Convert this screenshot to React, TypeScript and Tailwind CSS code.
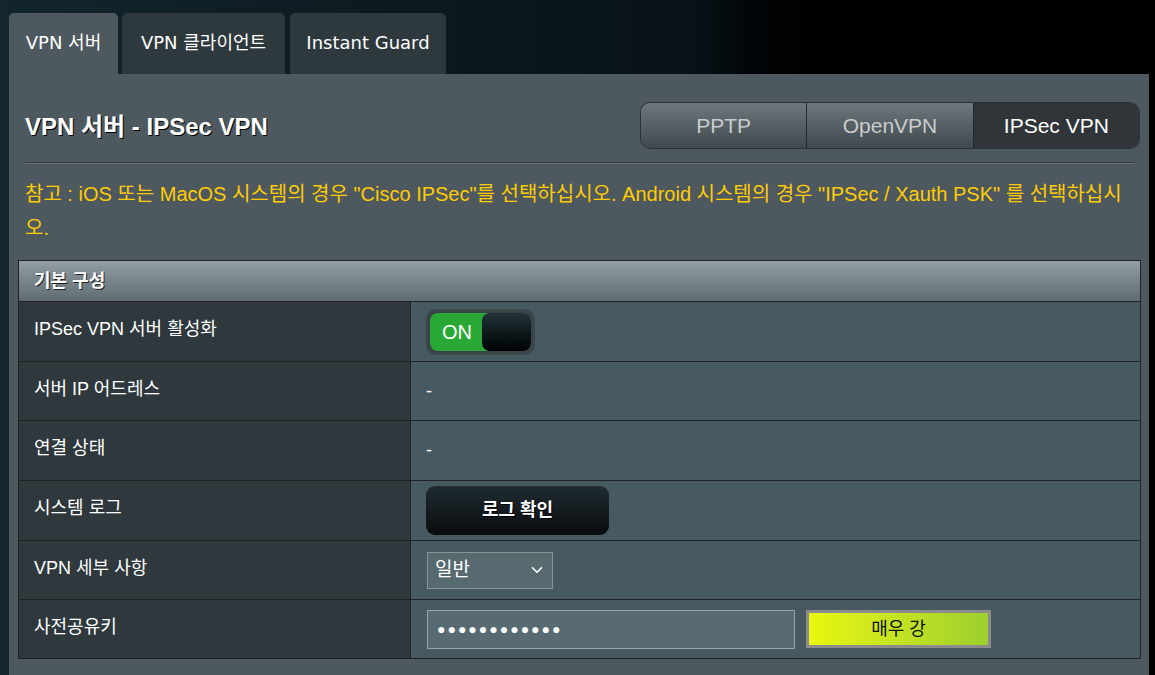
import { ChevronDown } from 'lucide-react'

const rows: { label: string; kind: 'toggle' | 'dash' | 'button' | 'select' | 'psk'; h: string }[] = [
  { label: 'IPSec VPN 서버 활성화', kind: 'toggle', h: 'h-[60px]' },
  { label: '서버 IP 어드레스', kind: 'dash', h: 'h-[59px]' },
  { label: '연결 상태', kind: 'dash', h: 'h-[60px]' },
  { label: '시스템 로그', kind: 'button', h: 'h-[60px]' },
  { label: 'VPN 세부 사항', kind: 'select', h: 'h-[59px]' },
  { label: '사전공유키', kind: 'psk', h: 'h-[58px]' },
]

function Toggle() {
  return (
    <div className="flex h-[46px] w-[109px] items-center rounded-[10px] border-2 border-[#3c474c] bg-[#3a4448] p-[2px]">
      <div className="flex h-full w-full overflow-hidden rounded-[8px]">
        <div className="flex w-[58px] items-center justify-center bg-[#2aa835] pr-[4px] text-[20px] text-white">ON</div>
        <div className="-ml-[6px] flex-1 rounded-[8px] bg-gradient-to-b from-[#22343a] to-[#020404]" />
      </div>
    </div>
  )
}

function Cell({ kind }: { kind: string }) {
  if (kind === 'toggle') return <Toggle />
  if (kind === 'dash') return <span className="text-[18px] text-white">-</span>
  if (kind === 'button')
    return (
      <button className="h-[49px] w-[183px] rounded-[9px] bg-gradient-to-b from-[#1f2c32] to-[#090c0e] text-[18px] font-bold text-white [text-shadow:1px_1px_0_#000]">
        로그 확인
      </button>
    )
  if (kind === 'select')
    return (
      <div className="ml-[1px] flex h-[37px] w-[126px] items-center justify-between border border-[#8a9599] bg-[#576a70] pl-[7px] pr-[6px] text-[19px] text-white">
        <span>일반</span>
        <ChevronDown size={18} strokeWidth={2.2} />
      </div>
    )
  return (
    <div className="ml-[1px] flex items-center gap-[11px]">
      <div className="flex h-[39px] w-[368px] items-center border border-[#9aa3a6] bg-[#586b72] px-[9px] text-[14px] tracking-[2px] text-white">
        ●●●●●●●●●●●●
      </div>
      <div className="flex h-[38px] w-[185px] items-center justify-center border-[3px] border-[#8c8c8c] bg-gradient-to-r from-[#e9f70b] to-[#9dcf2c] text-[18px] text-[#111]">
        매우 강
      </div>
    </div>
  )
}

export default function App() {
  return (
    <div
      className="h-[675px] w-[1155px] overflow-hidden bg-gradient-to-r from-[#13252d] via-[#081217] via-60% to-black to-75%"
      style={{ fontFamily: '"Liberation Sans", "Noto Sans CJK KR", sans-serif' }}
    >
      <div className="ml-[9px] w-[1140px] pt-[13px]">
        {/* tabs */}
        <div className="flex h-[61px] items-end gap-[4px] text-[18px] text-white" style={{ fontFamily: '"DejaVu Sans", "Noto Sans CJK KR", sans-serif' }}>
          <div className="flex h-full w-[109px] items-center justify-center rounded-t-[5px] bg-[#4e595f] pb-[2px]">VPN 서버</div>
          <div className="flex h-full w-[163px] items-center justify-center rounded-t-[5px] bg-[#2e393e] pb-[2px]">VPN 클라이언트</div>
          <div className="ml-[1px] flex h-full w-[156px] items-center justify-center rounded-t-[5px] bg-[#2e393e] pb-[2px]">Instant Guard</div>
        </div>

        {/* panel */}
        <div className="h-[601px] bg-[#4e595f] pl-[9px] pr-[8px] pt-[28px]">
          <div className="flex items-center justify-between pl-[7px] pr-[1px]">
            <h1 className="pt-[2px] text-[24px] font-bold text-white [text-shadow:1px_1px_0_#000]">VPN 서버 - IPSec VPN</h1>
            <div className="flex h-[47px] w-[500px] overflow-hidden rounded-[10px] border border-[#2a3235] text-[21px]">
              <div className="flex flex-1 items-center justify-center border-r border-[#22292c] bg-gradient-to-b from-[#6e787d] to-[#40494d] text-[#c9cccd]">PPTP</div>
              <div className="flex flex-1 items-center justify-center border-r border-[#22292c] bg-gradient-to-b from-[#6e787d] to-[#40494d] text-[#c9cccd]">OpenVPN</div>
              <div className="flex flex-1 items-center justify-center bg-[#2f3538] text-white">IPSec VPN</div>
            </div>
          </div>

          <div className="mx-[7px] mt-[13px] h-[2px] border-t border-b border-t-[#363e42] border-b-[#65727a]" />

          <p className="mt-[13px] pl-[7px] text-[20px] leading-[34px] text-[#ffcc00]">
            참고 : iOS 또는 MacOS 시스템의 경우 "Cisco IPSec"를 선택하십시오. Android 시스템의 경우 "IPSec / Xauth PSK" 를 선택하십시오.
          </p>

          <div className="mt-[15px] border border-[#222]">
            <div className="flex h-[41px] items-center border-b border-[#222] bg-gradient-to-b from-[#929ea3] to-[#5f6c71] pl-[15px] text-[18px] font-bold text-white [text-shadow:1px_1px_0_#222]">
              기본 구성
            </div>
            {rows.map((r, i) => (
              <div key={r.label} className={`grid grid-cols-[392px_1fr] ${r.h} ${i < rows.length - 1 ? 'border-b border-[#222]' : ''}`}>
                <div className="flex items-center border-r border-[#222] bg-[#2e383d] pb-[4px] pl-[15px] text-[18px] text-white">{r.label}</div>
                <div className="flex items-center bg-[#485a61] pl-[15px]">
                  <Cell kind={r.kind} />
                </div>
              </div>
            ))}
          </div>
        </div>
      </div>
    </div>
  )
}
